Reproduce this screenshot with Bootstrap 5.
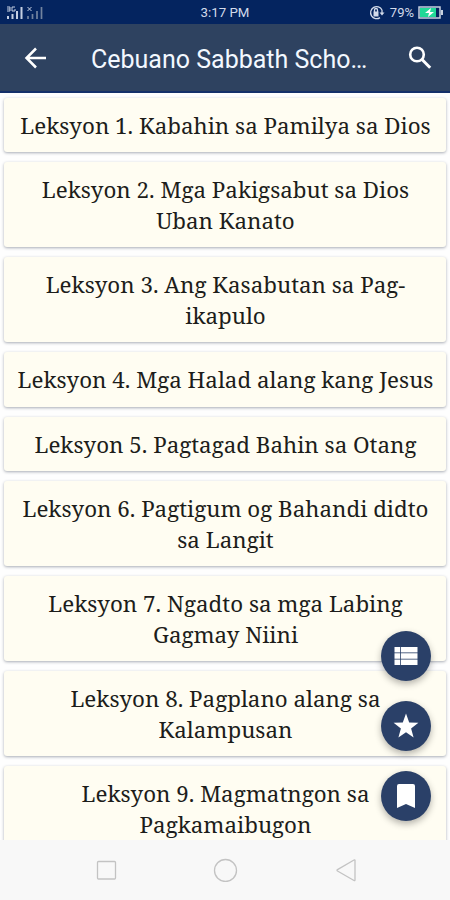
<!DOCTYPE html>
<html lang="ceb">
<head>
<meta charset="utf-8">
<meta name="viewport" content="width=device-width, initial-scale=1">
<title>Cebuano Sabbath School</title>
<link href="https://cdn.jsdelivr.net/npm/bootstrap@5.3.0/dist/css/bootstrap.min.css" rel="stylesheet">
<style>
body{font-family:Roboto,"Liberation Sans",sans-serif;background:#fefefe}
.screen{width:450px;height:900px}
.status-bar{height:24px;background:#04245f;color:#d3dbea;font-size:13px;padding:1px 6px 0}
.status-side{flex:1 1 0}
.clock{font-size:13.3px}
.app-bar{height:69px;background:#2e4260;color:#f3f8ff;border-bottom:2px solid #14306a;padding:0 18px 0 24px}
.app-title{font-size:25px;margin-left:43px;line-height:1;padding-top:3px;width:276px;white-space:nowrap}
.lessons{padding:4.5px 4px 0;gap:10px}
.lesson{background:#fffdf2;border:0;border-radius:3px;padding:13px 0 11px 1px;box-shadow:0 1px 3px rgba(50,60,80,.42);font-family:"Noto Serif","DejaVu Serif Condensed",serif;font-size:22.35px;line-height:30.5px;color:#1d1d1b;white-space:nowrap}
.fabs{right:19.500px;top:630.5px;gap:20px}
.fab{width:50px;height:50px;background:#2a4068;box-shadow:0 3px 7px rgba(0,0,0,.3)}
.nav-keys{height:60px;background:#f8f8f8}
</style>
<script src="https://cdn.jsdelivr.net/npm/bootstrap@5.3.0/dist/js/bootstrap.bundle.min.js"></script>
</head>
<body>
<div class="screen d-flex flex-column position-relative overflow-hidden">
  <header class="status-bar d-flex align-items-center flex-shrink-0">
    <div class="status-side d-flex">
      <svg width="38" height="14" viewBox="0 0 38 14" fill="none" stroke="#c5cfe2"><path d="M2 10v3M6.500 8v5M11 5v8M15.500 1v12" stroke-width="2"/><path d="M1 1h3v4H1M1 3h3M9 1H6v4h3v-2" stroke-width="1"/><path d="M21.500 1l4 4M25.500 1l-4 4"/><path d="M22 10v3M26.500 8v5M31 5v8M35.500 1v12" stroke="#72839f" stroke-width="1.700"/></svg>
    </div>
    <span class="clock">3:17 PM</span>
    <div class="status-side d-flex align-items-center justify-content-end">
      <svg width="17" height="15" viewBox="0 0 17 15" fill="none" stroke="#d3dbea" stroke-width="1.300"><path d="M11 12.600A6 6 0 1 1 13 5M13 5v3"/><path d="M10.500 7.500h5L13 10.500z" fill="#d3dbea" stroke="none"/><path d="M4.500 6.500h5v5h-5z" fill="#d3dbea" stroke="none"/><path d="M5.500 7V5a1.500 1.500 0 0 1 3 0v2"/></svg>
      <span class="ms-1">79%</span>
      <svg class="ms-1" width="26" height="13" viewBox="0 0 26 13"><path d="M1 1h21v11H1z" fill="none" stroke="#c6d0df" stroke-width="1.500"/><path d="M2 2h16v9H2z" fill="#20d997"/><path d="M23 4h2v5h-2z" fill="#c6d0df"/><path d="M13 2L7 7h4l-1 4 6-5h-4z" fill="#fff"/></svg>
    </div>
  </header>
  <nav class="app-bar d-flex align-items-center flex-shrink-0">
    <svg width="24" height="22" viewBox="0 0 24 22" fill="none" stroke="#fff" stroke-width="2.500"><path d="M22 11H3M12 1.500L2.500 11l9.500 9.500"/></svg>
    <div class="app-title">Cebuano Sabbath Scho…</div>
    <svg class="ms-auto" width="24" height="24" viewBox="0 0 24 24" fill="none" stroke="#fff" stroke-width="2.600"><circle cx="9" cy="8.500" r="6.800"/><path d="M13.500 13l8.700 8.700" stroke-width="3"/></svg>
  </nav>
  <main class="lessons d-flex flex-column flex-grow-1 overflow-hidden text-center">
    <div class="card lesson flex-shrink-0"><div>Leksyon 1. Kabahin sa Pamilya sa Dios</div></div>
    <div class="card lesson flex-shrink-0"><div>Leksyon 2. Mga Pakigsabut sa Dios<br>Uban Kanato</div></div>
    <div class="card lesson flex-shrink-0"><div>Leksyon 3. Ang Kasabutan sa Pag-<br>ikapulo</div></div>
    <div class="card lesson flex-shrink-0"><div>Leksyon 4. Mga Halad alang kang Jesus</div></div>
    <div class="card lesson flex-shrink-0"><div>Leksyon 5. Pagtagad Bahin sa Otang</div></div>
    <div class="card lesson flex-shrink-0"><div>Leksyon 6. Pagtigum og Bahandi didto<br>sa Langit</div></div>
    <div class="card lesson flex-shrink-0"><div>Leksyon 7. Ngadto sa mga Labing<br>Gagmay Niini</div></div>
    <div class="card lesson flex-shrink-0"><div>Leksyon 8. Pagplano alang sa<br>Kalampusan</div></div>
    <div class="card lesson flex-shrink-0"><div>Leksyon 9. Magmatngon sa<br>Pagkamaibugon</div></div>
  </main>
  <div class="fabs position-absolute d-flex flex-column">
    <div class="fab rounded-circle d-flex align-items-center justify-content-center"><svg width="24" height="20" viewBox="0 0 24 20"><path d="M.5 1h23v18H.5z" fill="#fff"/><path d="M6.500 1v18M0 6.800h24M0 13.200h24" stroke="#2a4068" stroke-width=".8"/></svg></div>
    <div class="fab rounded-circle d-flex align-items-center justify-content-center"><svg width="26" height="26" viewBox="0 0 26 26"><path d="M13 .5l3.200 8.900 9.200.3-7.300 5.700 2.500 9L13 19.200l-7.600 5.200 2.500-9L.6 9.700l9.200-.3z" fill="#fff"/></svg></div>
    <div class="fab rounded-circle d-flex align-items-center justify-content-center"><svg width="20" height="24" viewBox="0 0 20 24"><path d="M3 0h14a2 2 0 0 1 2 2v22l-9-4-9 4V2a2 2 0 0 1 2-2z" fill="#fff"/></svg></div>
  </div>
  <footer class="nav-keys flex-shrink-0 d-flex align-items-center justify-content-center">
    <svg width="262" height="24" viewBox="0 0 262 24" fill="none" stroke="#c3c3c3" stroke-width="1.300"><rect x="3.500" y="3.500" width="18" height="17.500" rx="1"/><circle cx="131.500" cy="12.500" r="11"/><path d="M261 2.500v19.500q0 1-1 .5L243.500 13q-1-.7 0-1.400L260 2q1-.5 1 .5z"/></svg>
  </footer>
</div>
</body>
</html>
